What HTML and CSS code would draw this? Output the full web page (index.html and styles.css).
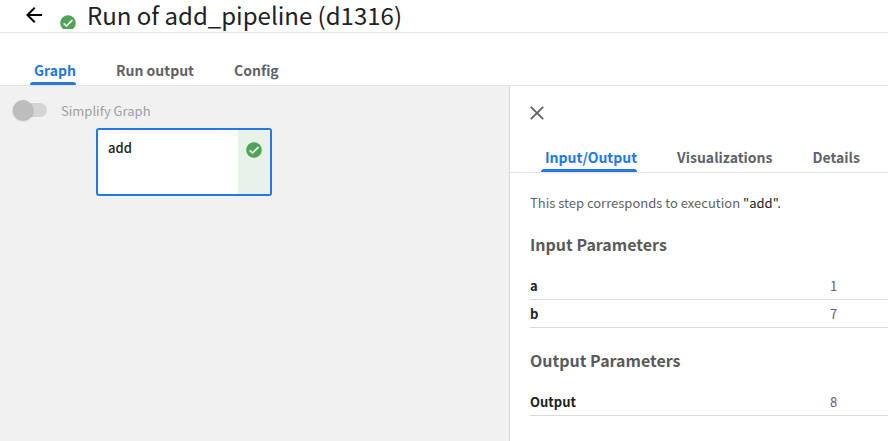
FILE: index.html
```html
<!DOCTYPE html>
<html lang="en">
<head>
<meta charset="utf-8">
<title>Run of add_pipeline (d1316)</title>
<link rel="stylesheet" href="styles.css">
</head>
<body>
<header class="header">
  <svg class="back" viewBox="0 0 24 24"><path d="M20 11H7.83l5.59-5.59L12 4l-8 8 8 8 1.41-1.41L7.83 13H20v-2z"/></svg>
  <span class="status"><svg class="check" viewBox="0 0 18 18"><circle cx="9" cy="9" r="7.8"/><path d="M4.600 9.300l2.900 2.700L13.500 6"/></svg></span>
  <h1 class="title">Run of add_pipeline (d1316)</h1>
</header>
<nav class="tabs main-tabs">
  <a class="tab active"><span>Graph</span></a>
  <a class="tab"><span>Run output</span></a>
  <a class="tab"><span>Config</span></a>
</nav>
<main class="content">
  <section class="canvas">
    <div class="simplify"><span class="switch"><i class="knob"></i></span><span class="label">Simplify Graph</span></div>
    <div class="node">
      <span class="node-name">add</span>
      <span class="node-status"><svg class="check" viewBox="0 0 18 18"><circle cx="9" cy="9" r="7.8"/><path d="M4.600 9.300l2.900 2.700L13.500 6"/></svg></span>
    </div>
  </section>
  <aside class="panel">
    <svg class="close" viewBox="0 0 14 14"><path d="M.8.8l12.400 12.400M13.200.8L.8 13.200"/></svg>
    <nav class="tabs side-tabs">
      <a class="tab active"><span>Input/Output</span></a>
      <a class="tab"><span>Visualizations</span></a>
      <a class="tab"><span>Details</span></a>
    </nav>
    <div class="details">
      <p class="note"><span>This step corresponds to execution</span> <b>"add".</b></p>
      <h2><span>Input Parameters</span></h2>
      <div class="row"><b>a</b><span>1</span></div>
      <div class="row"><b>b</b><span>7</span></div>
      <h2><span>Output Parameters</span></h2>
      <div class="row"><b>Output</b><span>8</span></div>
    </div>
  </aside>
</main>
</body>
</html>
```
FILE: styles.css
```css
* { box-sizing: border-box; }
body {
  margin: 0;
  width: 888px;
  height: 441px;
  overflow: hidden;
  display: flex;
  flex-direction: column;
  background: #fff;
  color: #202124;
  font: 13px/20px "Noto Sans CJK SC", "Noto Sans", sans-serif;
}
.header {
  display: flex;
  height: 33px;
  flex: none;
  border-bottom: 1px solid #e8e8e8;
}
.back { width: 24px; height: 24px; margin: 3px 0 0 22px; fill: #000; }
.status { width: 18px; height: 15px; margin: 14px 0 0 13px; overflow: hidden; }
.check { display: block; width: 18px; height: 18px; }
.check circle { fill: #50a45a; }
.check path { fill: none; stroke: #fff; stroke-width: 1.6; }
.title {
  margin: 0 0 0 10px;
  font-size: 24px;
  line-height: 30px;
  font-weight: 400;
  white-space: nowrap;
}
.tabs { display: flex; flex: none; border-bottom: 1px solid #e4e4e4; }
.tab {
  position: relative;
  font-size: 14px;
  line-height: 18px;
  font-weight: 700;
  color: #5f6368;
  white-space: nowrap;
}
.tab.active { color: #2577e3; }
.tab.active::after {
  content: "";
  position: absolute;
  left: -4px;
  right: 0;
  bottom: 0;
  height: 3px;
  border-radius: 3px 3px 0 0;
  background: #2577e3;
}
.main-tabs { height: 53px; padding: 28px 0 0 34px; gap: 40px; }
.content { display: flex; flex: 1; min-height: 0; }
.canvas { width: 509px; background: #f1f1f1; }
.simplify { display: flex; align-items: center; height: 20px; margin: 15px 0 0 13px; color: #9e9e9e; }
.switch {
  display: flex;
  align-items: center;
  width: 34px;
  height: 14px;
  margin-top: -2px;
  border-radius: 7px;
  background: #d5d5d5;
}
.knob {
  flex: none;
  width: 20px;
  height: 20px;
  border-radius: 50%;
  background: #bdbdbd;
  box-shadow: 0 1px 2px rgba(0, 0, 0, .3);
}
.label { margin-left: 14px; }
.node {
  display: flex;
  width: 176px;
  height: 68px;
  margin: 7px 0 0 96px;
  border: 2px solid #2577e3;
  border-radius: 3px;
  background: #fff;
}
.node-name { flex: 1; padding: 8px 10px; font-weight: 500; }
.node-status { width: 32px; padding: 11px 7px; background: #e7f2e9; }
.panel { width: 379px; border-left: 1px solid #d8d8d8; }
.close {
  display: block;
  width: 14px;
  height: 14px;
  margin: 20px 0 0 20px;
  fill: none;
  stroke: #5f6368;
  stroke-width: 1.8;
}
.side-tabs { height: 53px; padding: 28px 0 0 35px; gap: 40px; }
.details { padding: 20px 0 0 20px; }
.note { margin: 0; color: #5f6368; }
.note b { font-weight: 400; color: #202124; }
h2 { margin: 20px 0 16px; font-size: 16px; line-height: 24px; font-weight: 700; color: #5a5a5a; }
.note + h2 { margin-top: 19px; }
.row { display: flex; height: 28px; padding-top: 4px; border-bottom: 1px solid #dadada; }
.row b { width: 300px; }
.row span { color: #5f6368; }
```
